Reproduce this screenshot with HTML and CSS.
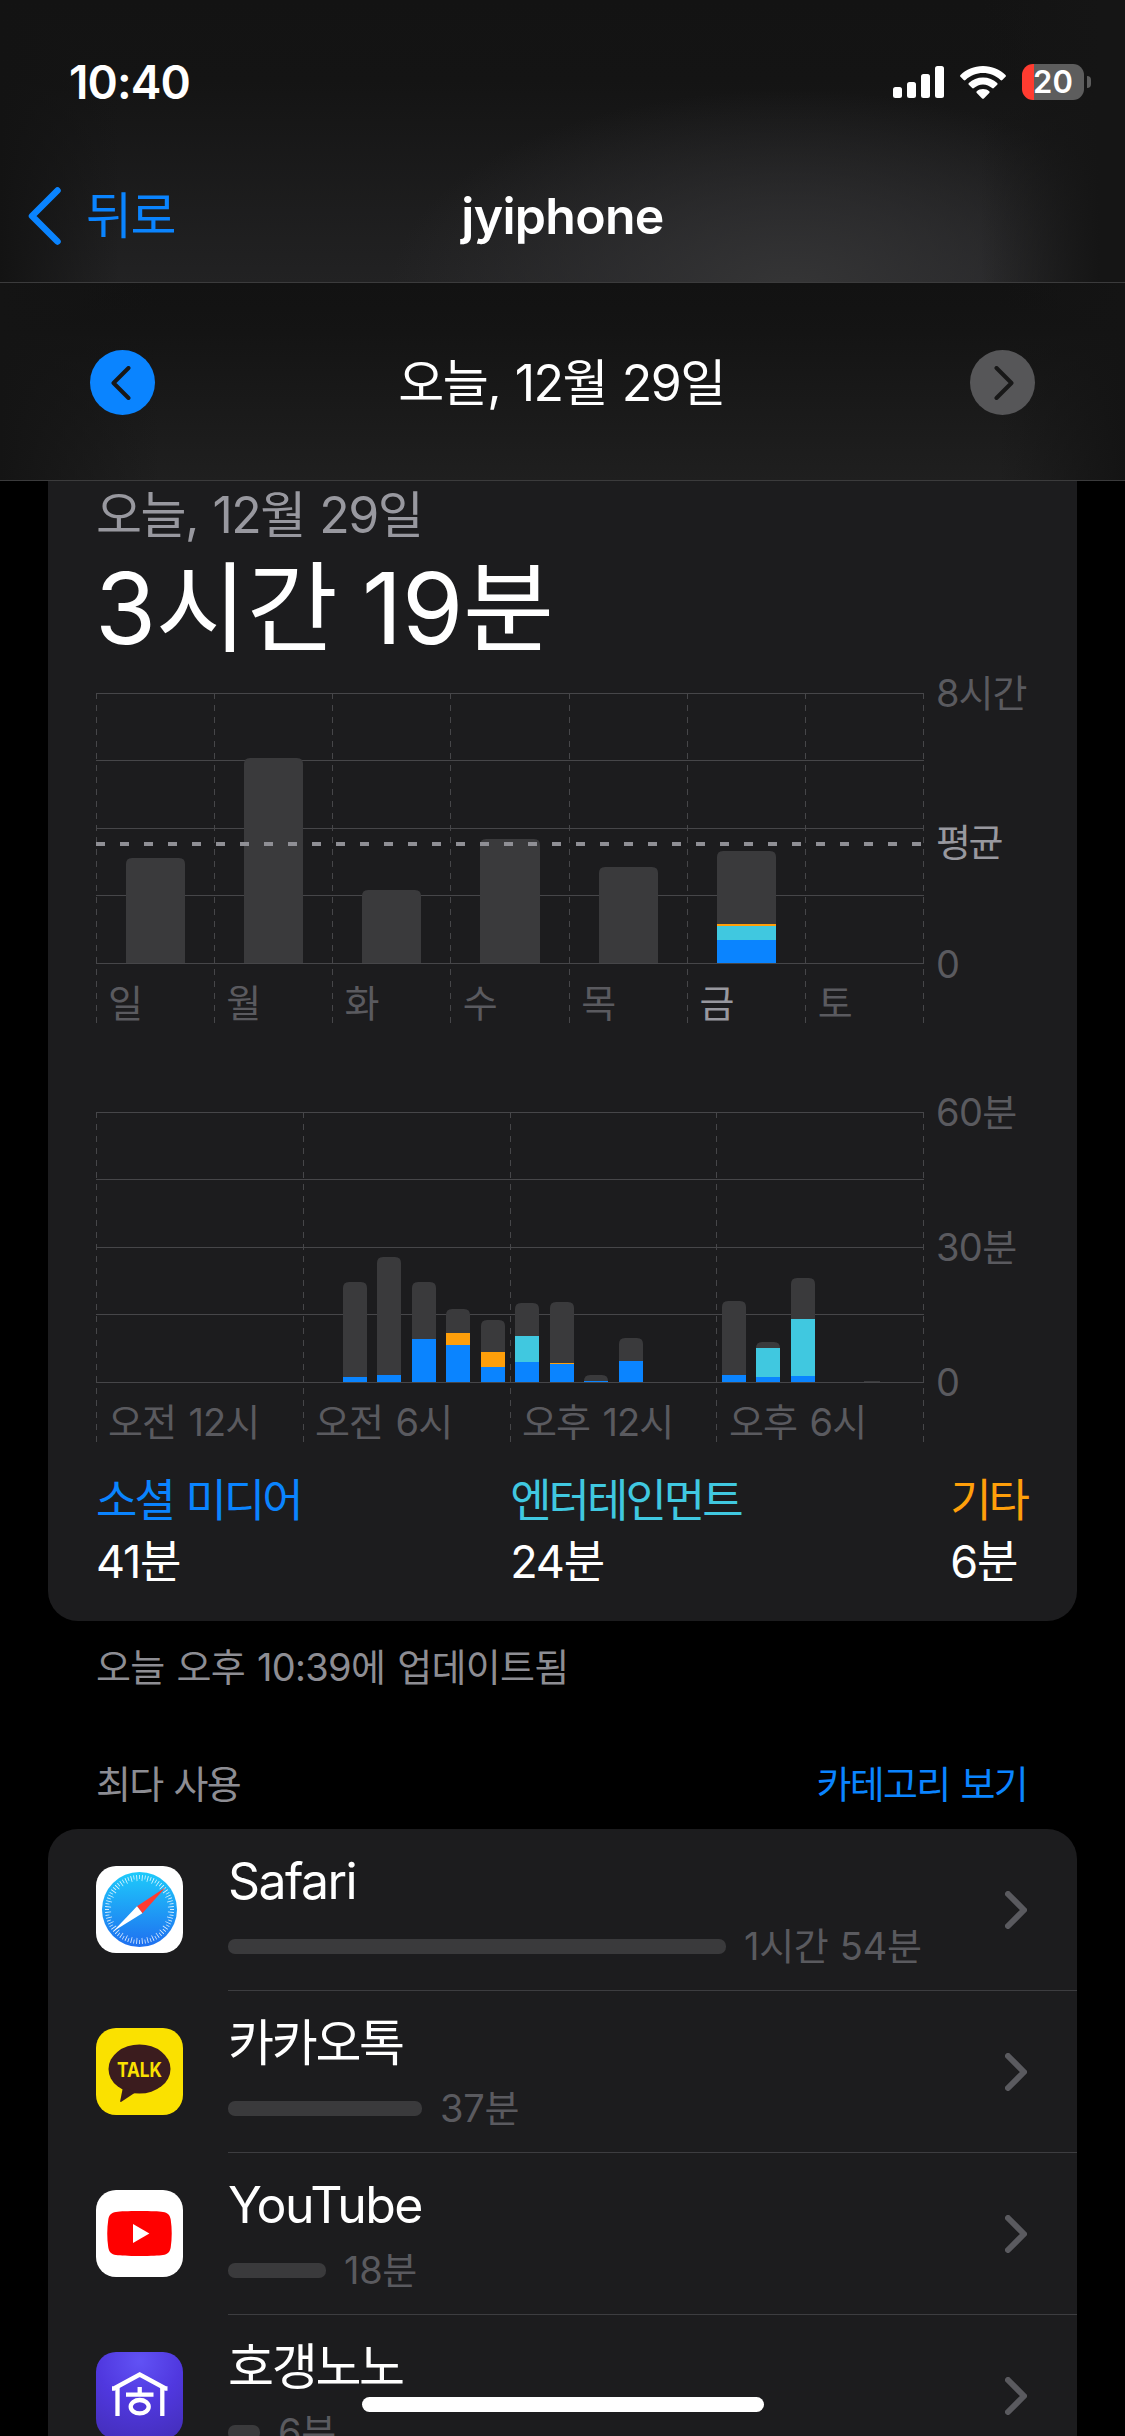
FILE: index.html
```html
<!DOCTYPE html>
<html lang="ko">
<head>
<meta charset="utf-8">
<title>jyiphone</title>
<link rel="stylesheet" href="styles.css">
</head>
<body>
<div class="screen">
  <header class="top">
    <div class="status">
      <span class="clock">10:40</span>
      <div class="indicators">
        <svg width="51" height="32" viewBox="0 0 51 32" fill="#fff"><rect x="0" y="21" width="9" height="11" rx="2.5"/><rect x="14" y="16" width="9" height="16" rx="2.5"/><rect x="28" y="8" width="9" height="24" rx="2.5"/><rect x="42" y="0" width="9" height="32" rx="2.5"/></svg>
        <svg width="46" height="33" viewBox="0 0 46 33" fill="#fff"><path d="M23 0C32 0 40 3.5 45.5 9q.9.9 0 1.8l-3.2 3.2q-.9.9-1.800 0C35.500 9.300 29.500 7 23 7S10.500 9.300 5.500 14q-.9.9-1.800 0L.5 10.800q-.9-.9 0-1.800C6 3.500 14 0 23 0z"/><path d="M23 11.500c5.600 0 10.500 2 14.200 5.500q.9.9 0 1.800l-3.400 3.300q-.8.8-1.700 0C29.600 20 26.500 18.500 23 18.500S16.400 20 13.900 22.100q-.9.8-1.700 0L8.800 18.800q-.9-.9 0-1.800C12.500 13.500 17.400 11.500 23 11.500z"/><path d="M23 23c2.500 0 4.600.8 6.200 2.200q.9.9 0 1.800L23.900 32.400q-.9.9-1.800 0L16.800 27q-.9-.9 0-1.800C18.400 23.800 20.500 23 23 23z"/></svg>
        <div class="battery"><span class="battery-level">20</span></div>
      </div>
    </div>
    <nav class="nav">
      <a class="back"><svg width="33" height="58" viewBox="0 0 33 58"><path d="M29.500 3.500L4 29l25.500 25.500" fill="none" stroke="#0a84ff" stroke-width="6.500" stroke-linecap="round" stroke-linejoin="round"/></svg><span>뒤로</span></a>
      <h1 class="title">jyiphone</h1>
    </nav>
  </header>
  <div class="datebar">
    <span class="round prev"><svg width="20" height="34" viewBox="0 0 20 34"><path d="M17.500 2L2.500 17l15 15"/></svg></span>
    <span class="date">오늘, 12월 29일</span>
    <span class="round next"><svg width="20" height="34" viewBox="0 0 20 34"><path d="M2.500 2l15 15-15 15"/></svg></span>
  </div>

  <section class="card usage">
    <div class="subtitle">오늘, 12월 29일</div>
    <div class="total">3시간 19분</div>

    <div class="chart weekly">
      <svg class="plot" width="828" height="331" viewBox="0 0 828 331">
        <g class="rules"><path d="M0 .5H828M0 67.500H828M0 135.500H828M0 202.500H828M0 270.500H828"/></g>
        <g class="ticks"><path d="M.5 0V330M118.500 0V330M236.500 0V330M354.500 0V330M473.500 0V330M591.500 0V330M709.500 0V330M827.500 0V330"/></g>
        <g class="other">
          <path d="M30 270v-99q0-6 6-6h47q6 0 6 6v99z"/>
          <path d="M148 270V71q0-6 6-6h47q6 0 6 6v199z"/>
          <path d="M266 270v-67q0-6 6-6h47q6 0 6 6v67z"/>
          <path d="M384 270V152q0-6 6-6h48q6 0 6 6v118z"/>
          <path d="M503 270v-90q0-6 6-6h47q6 0 6 6v90z"/>
          <path d="M621 270V164q0-6 6-6h47q6 0 6 6v106z"/>
        </g>
        <rect class="etc" x="621" y="231" width="59" height="2"/>
        <rect class="fun" x="621" y="233" width="59" height="14"/>
        <rect class="social" x="621" y="247" width="59" height="23"/>
        <path class="average" d="M0 151H828"/>
      </svg>
      <div class="labels"><span>일</span><span>월</span><span>화</span><span>수</span><span>목</span><span class="today">금</span><span>토</span></div>
      <div class="axis"><span>8시간</span><span class="avg">평균</span><span>0</span></div>
    </div>

    <div class="chart hourly">
      <svg class="plot" width="828" height="331" viewBox="0 0 828 331">
        <g class="rules"><path d="M0 .5H828M0 67.500H828M0 135.500H828M0 202.500H828M0 270.500H828"/></g>
        <g class="ticks"><path d="M.5 0V330M207.500 0V330M414.500 0V330M620.500 0V330M827.500 0V330"/></g>
        <g class="other">
          <path d="M247 270v-94q0-6 6-6h12q6 0 6 6v94z"/>
          <path d="M281 270V151q0-6 6-6h12q6 0 6 6v119z"/>
          <path d="M316 270v-94q0-6 6-6h12q6 0 6 6v94z"/>
          <path d="M350 270v-67q0-6 6-6h12q6 0 6 6v67z"/>
          <path d="M385 270v-56q0-6 6-6h12q6 0 6 6v56z"/>
          <path d="M419 270v-73q0-6 6-6h12q6 0 6 6v73z"/>
          <path d="M454 270v-74q0-6 6-6h12q6 0 6 6v74z"/>
          <path d="M488 270v-1q0-6 6-6h12q6 0 6 6v1z"/>
          <path d="M523 270v-38q0-6 6-6h12q6 0 6 6v38z"/>
          <path d="M626 270v-75q0-6 6-6h12q6 0 6 6v75z"/>
          <path d="M660 270v-34q0-6 6-6h12q6 0 6 6v34z"/>
          <path d="M695 270v-98q0-6 6-6h12q6 0 6 6v98z"/>
          <rect x="768" y="269" width="16" height="1"/>
        </g>
        <g class="social">
          <rect x="247" y="265" width="24" height="5"/><rect x="281" y="263" width="24" height="7"/><rect x="316" y="227" width="24" height="43"/><rect x="350" y="233" width="24" height="37"/><rect x="385" y="255" width="24" height="15"/><rect x="419" y="250" width="24" height="20"/><rect x="454" y="252" width="24" height="18"/><rect x="488" y="269" width="24" height="1"/><rect x="523" y="249" width="24" height="21"/><rect x="626" y="263" width="24" height="7"/><rect x="660" y="265" width="24" height="5"/><rect x="695" y="264" width="24" height="6"/>
        </g>
        <g class="etc"><rect x="350" y="221" width="24" height="12"/><rect x="385" y="240" width="24" height="15"/><rect x="454" y="251" width="24" height="1"/></g>
        <g class="fun"><rect x="419" y="224" width="24" height="26"/><rect x="660" y="236" width="24" height="29"/><rect x="695" y="207" width="24" height="57"/></g>
      </svg>
      <div class="labels"><span>오전 12시</span><span>오전 6시</span><span>오후 12시</span><span>오후 6시</span></div>
      <div class="axis"><span>60분</span><span>30분</span><span>0</span></div>
    </div>

    <div class="legend">
      <div><b class="c-social">소셜 미디어</b><span>41분</span></div>
      <div><b class="c-fun">엔터테인먼트</b><span>24분</span></div>
      <div><b class="c-etc">기타</b><span>6분</span></div>
    </div>
  </section>

  <p class="updated">오늘 오후 10:39에 업데이트됨</p>

  <div class="section-head"><span>최다 사용</span><a>카테고리 보기</a></div>

  <section class="card apps">
    <div class="row">
      <svg class="icon" viewBox="0 0 87 87">
        <defs><linearGradient id="compass" x1="0" y1="0" x2="0" y2="1"><stop offset="0" stop-color="#1ecbfb"/><stop offset="1" stop-color="#1f6ff0"/></linearGradient></defs>
        <rect width="87" height="87" rx="20" fill="#fff"/><circle cx="43.500" cy="43.500" r="37.500" fill="url(#compass)"/>
        <circle cx="43.500" cy="43.500" r="32.500" fill="none" stroke="#fff" stroke-opacity=".8" stroke-width="4" pathLength="72" stroke-dasharray=".3 1.700" stroke-dashoffset=".15"/>
        <circle cx="43.500" cy="43.500" r="31.500" fill="none" stroke="#fff" stroke-opacity=".85" stroke-width="6" pathLength="72" stroke-dasharray=".3 1.700" stroke-dashoffset="-.85"/>
        <path d="M69.700 21.300L41 40.200l5.400 7.100z" fill="#ff3b30"/><path d="M17 65.500l24-25.300 5.400 7.100z" fill="#fff"/>
      </svg>
      <div class="body"><div class="name latin">Safari</div><div class="meta"><i class="bar" style="width:498px"></i><span>1시간 54분</span></div></div>
      <svg class="chev" viewBox="0 0 22 38"><path d="M3 3l16 16L3 35"/></svg>
    </div>
    <div class="row">
      <svg class="icon" viewBox="0 0 87 87"><rect width="87" height="87" rx="20" fill="#fae100"/><ellipse cx="43.500" cy="41" rx="31" ry="24.500" fill="#3b1c1e"/><path d="M27 59l-2.800 14q-.2 1.500 1.200.7L40 64z" fill="#3b1c1e"/><text class="talk" x="43.500" y="49" textLength="45" lengthAdjust="spacingAndGlyphs">TALK</text></svg>
      <div class="body"><div class="name">카카오톡</div><div class="meta"><i class="bar" style="width:194px"></i><span>37분</span></div></div>
      <svg class="chev" viewBox="0 0 22 38"><path d="M3 3l16 16L3 35"/></svg>
    </div>
    <div class="row">
      <svg class="icon" viewBox="0 0 87 87"><rect width="87" height="87" rx="20" fill="#fff"/><path d="M43.500 21c12 0 19 .3 23.500 1 4.500.6 7 3 7.700 7.500 1.400 9 1.400 19 0 28-.7 4.500-3.200 6.900-7.700 7.500-4.500.7-11.500 1-23.500 1s-19-.3-23.500-1c-4.500-.6-7-3-7.700-7.500-1.400-9-1.400-19 0-28 .7-4.500 3.200-6.900 7.700-7.500 4.500-.7 11.500-1 23.500-1z" fill="#f00"/><path d="M37 34v19l16.400-9.500z" fill="#fff"/></svg>
      <div class="body"><div class="name latin">YouTube</div><div class="meta"><i class="bar" style="width:98px"></i><span>18분</span></div></div>
      <svg class="chev" viewBox="0 0 22 38"><path d="M3 3l16 16L3 35"/></svg>
    </div>
    <div class="row">
      <svg class="icon" viewBox="0 0 87 87">
        <defs><radialGradient id="violet" cx=".5" cy=".1" r=".95"><stop offset="0" stop-color="#6152f5"/><stop offset=".5" stop-color="#5038df"/><stop offset="1" stop-color="#452fbd"/></radialGradient></defs>
        <rect width="87" height="87" rx="20" fill="url(#violet)"/>
        <g fill="none" stroke="#fff" stroke-width="4.300"><path d="M16 36.500h2L43.700 22.500 69.500 36.500h2"/><path d="M21.500 34v30M66.300 34v30"/><path d="M43.700 35v8M30 42.700h27.500"/><ellipse cx="43.700" cy="54.700" rx="9" ry="6.700"/></g>
      </svg>
      <div class="body"><div class="name">호갱노노</div><div class="meta"><i class="bar" style="width:32px"></i><span>6분</span></div></div>
      <svg class="chev" viewBox="0 0 22 38"><path d="M3 3l16 16L3 35"/></svg>
    </div>
  </section>
  <div class="home-indicator"></div>
</div>
</body>
</html>
```
FILE: styles.css
```css
* { box-sizing: border-box; }
body { margin: 0; background: #000; color: #fff; font-family: Inter, "Noto Sans CJK KR", sans-serif; }
svg { display: block; flex: none; }
.screen { position: relative; width: 1125px; height: 2436px; overflow: hidden; background: #000; }

/* header */
.top {
  height: 283px;
  border-bottom: 1px solid #3b3b3c;
  background:
    linear-gradient(90deg, #131313 0, transparent 120px, transparent 980px, #151515 1100px),
    radial-gradient(ellipse 400px 200px at 790px 290px, #353536 0, rgba(50, 50, 52, .65) 45%, transparent 100%),
    linear-gradient(#131313 0, #141414 80px, #222223 283px);
}
.status { height: 130px; padding: 64px 34px 0 69px; display: flex; justify-content: space-between; align-items: flex-start; }
.clock { font-size: 46px; font-weight: 600; line-height: 36px; letter-spacing: -.9px; }
.indicators { display: flex; align-items: center; height: 36px; }
.indicators svg + svg { margin-left: 16px; }
.battery { position: relative; width: 62px; height: 36px; margin: 0 7px 0 16px; border-radius: 11px; background: linear-gradient(90deg, #ff3b30 12px, #5d5d5d 12px); display: flex; justify-content: center; }
.battery::after { content: ""; position: absolute; left: 65px; top: 12px; width: 4px; height: 12px; border-radius: 0 4px 4px 0; background: #5d5d5d; }
.battery-level { font-size: 31px; font-weight: 600; line-height: 36px; }
.nav { height: 152px; display: grid; grid-template-columns: 1fr auto 1fr; align-items: center; padding: 20px 28px 0; }
.back { display: flex; align-items: center; gap: 25px; color: #0a84ff; font-size: 50px; line-height: 60px; letter-spacing: -1.400px; }
.title { margin: 0; font-size: 50px; font-weight: 600; line-height: 60px; letter-spacing: -.7px; }
.datebar { height: 198px; padding: 2px 90px 0; display: flex; justify-content: space-between; align-items: center; border-bottom: 1px solid #3b3b3c; background: linear-gradient(90deg, #141414, transparent 160px, transparent 1000px, #141414), linear-gradient(#121212, #141414 25%, #1f1f1f); }
.round { width: 65px; height: 65px; border-radius: 50%; display: flex; align-items: center; justify-content: center; }
.round path { fill: none; stroke: #181818; stroke-width: 4; stroke-linecap: round; stroke-linejoin: round; }
.prev { background: #0a84ff; padding-right: 4px; }
.next { background: #565658; padding-left: 4px; }
.date, .subtitle { font-size: 50px; line-height: 60px; letter-spacing: -1.500px; word-spacing: 2px; }
.date { margin-right: 2px; }

/* cards */
.card { margin: 0 48px; background: #1c1c1e; }
.usage { height: 1140px; padding: 4px 48px 0; border-radius: 0 0 30px 30px; }
.subtitle { color: #98989f; }
.total { margin-top: 8px; font-size: 99px; line-height: 110px; letter-spacing: -.3px; word-spacing: -3px; text-indent: -1px; white-space: nowrap; }

/* charts */
.chart { display: grid; grid-template-columns: 828px 1fr; grid-template-rows: 271px 60px; }
.weekly { margin-top: 30px; }
.hourly { margin-top: 88px; }
.plot { grid-area: 1 / 1 / 3 / 2; }
.rules { stroke: #464649; }
.ticks { stroke: #464649; stroke-dasharray: 6; }
.other { fill: #3a3a3c; }
.social { fill: #0a84ff; }
.fun { fill: #40c8e0; }
.etc { fill: #ff9f0a; }
.average { stroke: #8f8f95; stroke-width: 4; stroke-dasharray: 9 15; }
.labels { grid-area: 2 / 1; display: grid; grid-auto-flow: column; grid-auto-columns: 1fr; color: #5a5a5f; font-size: 38px; line-height: 50px; padding-top: 14px; letter-spacing: -1px; word-spacing: 3px; }
.labels span { padding-left: 12px; white-space: nowrap; }
.labels .today { color: #98989f; }
.axis { grid-area: 1 / 2; display: flex; flex-direction: column; justify-content: space-between; margin: -25px 0 -24px; padding-left: 12px; color: #5a5a5f; font-size: 38px; line-height: 50px; letter-spacing: -.6px; white-space: nowrap; }
.weekly .axis { justify-content: flex-start; letter-spacing: -1px; }
.weekly .axis .avg { color: #98989f; margin: 99px 0 72px; letter-spacing: -2.500px; }

/* legend */
.legend { display: flex; justify-content: space-between; margin: 30px 2px 0 0; font-size: 45px; letter-spacing: -3px; }
.legend div { display: flex; flex-direction: column; }
.legend b { font-weight: 400; line-height: 56px; word-spacing: 3px; }
.legend span { line-height: 65px; letter-spacing: -1.200px; }
.c-social { color: #0a84ff; }
.c-fun { color: #40c8e0; }
.c-etc { color: #ff9f0a; }

.updated { margin: 21px 96px 0; font-size: 38px; line-height: 50px; letter-spacing: -.7px; word-spacing: 2px; color: #8d8d93; }
.section-head { margin: 67px 98px 20px 96px; display: flex; justify-content: space-between; font-size: 38px; line-height: 50px; letter-spacing: -1.700px; word-spacing: 2px; color: #8d8d93; }
.section-head a { color: #0a84ff; }

/* app list */
.apps { border-radius: 30px 30px 0 0; }
.row { position: relative; height: 162px; display: flex; align-items: center; padding: 0 50px 1px 48px; }
.row::after { content: ""; position: absolute; left: 180px; right: 0; bottom: 0; height: 1px; background: #3d3d40; }
.icon { width: 87px; height: 87px; }
.talk { font: 700 20.500px Inter, sans-serif; fill: #fae100; text-anchor: middle; }
.body { flex: 1; height: 161px; margin-left: 45px; padding-top: 22px; }
.name { font-size: 50px; line-height: 60px; letter-spacing: -2.300px; }
.latin { letter-spacing: -1.600px; }
.meta { display: flex; align-items: center; gap: 18px; margin-top: 10px; font-size: 38px; line-height: 50px; letter-spacing: -.3px; word-spacing: 1px; color: #5a5a5f; white-space: nowrap; }
.bar { height: 15px; border-radius: 7px; background: #3a3a3c; }
.chev { width: 22px; height: 38px; }
.chev path { fill: none; stroke: #5a5a5f; stroke-width: 6; stroke-linecap: round; stroke-linejoin: round; }
.home-indicator { position: absolute; left: 362px; top: 2397px; width: 402px; height: 15px; border-radius: 8px; background: #fff; }
```
